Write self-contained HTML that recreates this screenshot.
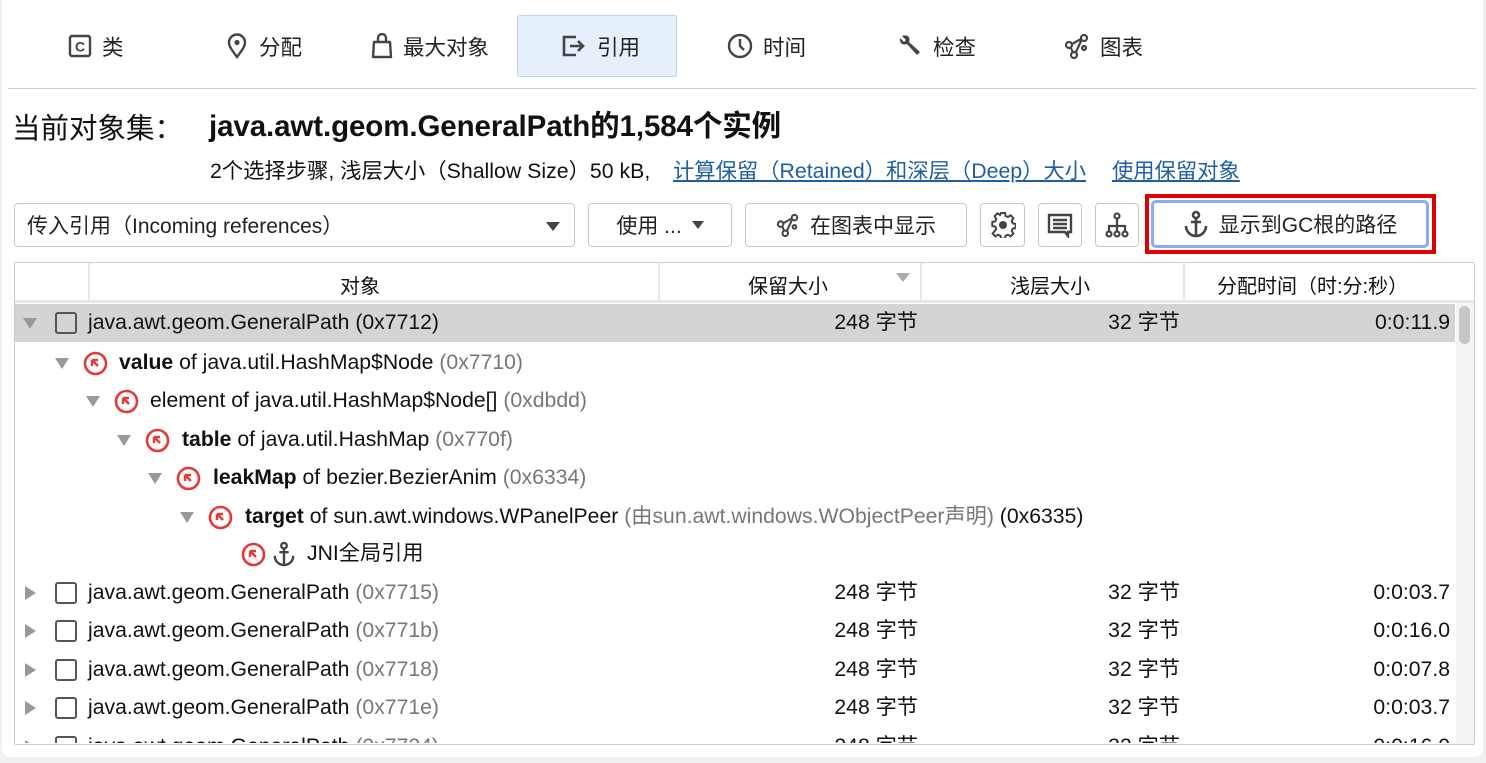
<!DOCTYPE html>
<html><head><meta charset="utf-8"><style>
*{box-sizing:border-box;margin:0;padding:0}
body{width:1486px;height:763px;background:#f0f0f0;font-family:"Liberation Sans","Noto Sans CJK SC",sans-serif;color:#111;position:relative;overflow:hidden}
.panel{position:absolute;left:2px;top:0;width:1481px;height:757px;background:#fff;border-radius:0 0 8px 8px}
.a{position:absolute;white-space:nowrap}
.tab{position:absolute;top:15px;height:62px;display:flex;align-items:center;font-size:21.5px;color:#222}
.tab svg{margin-right:10px}
.btn{position:absolute;top:203px;height:44px;border:1px solid #c8c8c8;border-radius:4px;background:#fff;display:flex;align-items:center;justify-content:center;font-size:21px;color:#222}
.gray{color:#777}
.row{position:absolute;left:15px;width:1440px;height:38px;font-size:21.2px;line-height:38px}
.row .a{top:0}
.tri{position:absolute;width:0;height:0}
.td{border-left:7px solid transparent;border-right:7px solid transparent;border-top:11px solid #999;top:14px}
.tr{border-top:7px solid transparent;border-bottom:7px solid transparent;border-left:11px solid #999;top:12px}
.cb{position:absolute;top:8px;width:22px;height:22px;border:2px solid #555;border-radius:3px}
.ri{position:absolute;top:7px}
.num{position:absolute;top:0;text-align:right}
</style></head><body>
<div class="panel"></div>
<div class="tab" style="left:68px"><svg width="24" height="24" viewBox="0 0 24 24"><rect x="2" y="2" width="20" height="20" rx="2" fill="none" stroke="#444" stroke-width="2.4"/><text x="12" y="17.5" font-size="14" text-anchor="middle" font-family="Liberation Sans" font-weight="bold" fill="#444">C</text></svg>类</div>
<div class="tab" style="left:225px"><svg width="24" height="26" viewBox="0 0 24 26"><path d="M12 24C6 16 4 13 4 9.5a8 8 0 0 1 16 0C20 13 18 16 12 24z" fill="none" stroke="#444" stroke-width="2.4"/><circle cx="12" cy="9.5" r="2.6" fill="#444"/></svg>分配</div>
<div class="tab" style="left:371px"><svg width="22" height="26" viewBox="0 0 22 26"><path d="M7 9V5a4 4 0 0 1 8 0v4" fill="none" stroke="#444" stroke-width="2.4"/><path d="M3 9h16l1 15H2z" fill="none" stroke="#444" stroke-width="2.4" stroke-linejoin="round"/></svg>最大对象</div>
<div style="position:absolute;left:517px;top:15px;width:160px;height:62px;background:#e6f0fc;border:1px solid #b9d3f3;border-radius:3px"></div>
<div class="tab" style="left:561px"><svg width="26" height="24" viewBox="0 0 26 24"><path d="M15 3H3v18h12" fill="none" stroke="#444" stroke-width="2.6"/><path d="M9 12h13M17 7l5 5-5 5" fill="none" stroke="#444" stroke-width="2.6"/></svg>引用</div>
<div class="tab" style="left:727px"><svg width="26" height="26" viewBox="0 0 26 26"><circle cx="13" cy="13" r="11" fill="none" stroke="#444" stroke-width="2.4"/><path d="M13 6v7l4 4" fill="none" stroke="#444" stroke-width="2.4"/></svg>时间</div>
<div class="tab" style="left:897px"><svg width="26" height="26" viewBox="0 0 26 26"><path d="M5 3l4 4-2 2-4-4C2 9 5 13 10 11l10 11 3-3-11-10c2-5-2-8-7-6z" fill="#444"/></svg>检查</div>
<div class="tab" style="left:1064px"><svg width="26" height="26" viewBox="0 0 26 26" fill="none" stroke="#444" stroke-width="2.2"><circle cx="20" cy="5" r="3"/><circle cx="5" cy="12" r="3"/><circle cx="10" cy="22" r="3"/><circle cx="20" cy="15" r="2"/><path d="M8 11l9-5M7 15l2 5M17.5 7l-6 13"/></svg>图表</div>
<div style="position:absolute;left:8px;top:88px;width:1468px;height:1px;background:#ccc"></div>
<div class="a" style="left:12px;top:107px;font-size:28.5px;font-family:'Noto Sans CJK SC',sans-serif;line-height:40px">当前对象集：</div>
<div class="a" style="left:209px;top:107px;font-size:29.5px;font-weight:bold;letter-spacing:-0.1px;line-height:40px">java.awt.geom.GeneralPath的1,584个实例</div>
<div class="a" style="left:210px;top:154px;font-size:21.3px">2个选择步骤, 浅层大小（Shallow Size）50 kB,</div>
<div class="a" style="left:673px;top:154px;font-size:21.3px;color:#1f5fa0;text-decoration:underline">计算保留（Retained）和深层（Deep）大小</div>
<div class="a" style="left:1112px;top:154px;font-size:21.3px;color:#1f5fa0;text-decoration:underline">使用保留对象</div>
<div class="btn" style="left:14px;width:561px;justify-content:flex-start;padding-left:12px">传入引用（Incoming references）<span class="tri" style="position:absolute;right:14px;top:18px;border-left:7px solid transparent;border-right:7px solid transparent;border-top:9px solid #444"></span></div>
<div class="btn" style="left:588px;width:144px">使用 ... <span style="display:inline-block;margin-left:10px;border-left:6px solid transparent;border-right:6px solid transparent;border-top:8px solid #444"></span></div>
<div class="btn" style="left:745px;width:222px"><svg width="24" height="24" viewBox="0 0 26 26" fill="none" stroke="#444" stroke-width="2.2" style="margin-right:10px"><circle cx="20" cy="5" r="3"/><circle cx="5" cy="12" r="3"/><circle cx="10" cy="22" r="3"/><circle cx="20" cy="15" r="2"/><path d="M8 11l9-5M7 15l2 5M17.5 7l-6 13"/></svg>在图表中显示</div>
<div class="btn" style="left:980px;width:45px"><svg width="26" height="26" viewBox="0 0 26 26"><path d="M11 2h4l.6 3 2.4 1 2.6-1.7 2.8 2.8L21.7 10l1 2.4 3 .6v4l-3 .6-1 2.4 1.7 2.6-2.8 2.8-2.6-1.7-2.4 1-.6 3h-4l-.6-3-2.4-1-2.6 1.7-2.8-2.8L6.3 18l-1-2.4-3-.6v-4l3-.6 1-2.4L4.6 5.1l2.8-2.8L10 4l.6-1z" transform="translate(0 -1)" fill="none" stroke="#444" stroke-width="2"/><circle cx="13" cy="13" r="4" fill="#444"/></svg></div>
<div class="btn" style="left:1038px;width:44px"><svg width="26" height="26" viewBox="0 0 26 26" fill="none" stroke="#444" stroke-width="2.4"><path d="M2 3h22v17h-3v4l-3-4H2z"/><path d="M6 8h14M6 12h14M6 16h14"/></svg></div>
<div class="btn" style="left:1095px;width:44px"><svg width="26" height="26" viewBox="0 0 26 26" fill="none" stroke="#444" stroke-width="2.2"><circle cx="13" cy="4" r="2.5"/><path d="M13 7v6M5 20v-6h16v6M13 13v7"/><circle cx="5" cy="22" r="2.5"/><circle cx="13" cy="22" r="2.5"/><circle cx="21" cy="22" r="2.5"/></svg></div>
<div style="position:absolute;left:1145px;top:194px;width:291px;height:60px;border:4px solid #e00000"></div>
<div class="btn" style="left:1151px;top:200px;width:278px;height:48px;border:3px solid #86adf0;border-radius:5px"><svg width="26" height="28" viewBox="0 0 26 28" fill="none" stroke="#444" stroke-width="2.6" style="margin-right:10px"><circle cx="13" cy="5" r="3"/><path d="M13 8v18M8 12h10M3 16c0 6 5 10 10 10s10-4 10-10"/></svg>显示到GC根的路径</div>
<div style="position:absolute;left:14px;top:262px;width:1461px;height:483px;border:1.5px solid #ccc;border-radius:2px;overflow:hidden;background:#fff">
 <div style="position:absolute;left:0;top:0;width:1461px;height:40px;border-bottom:3px solid #e8e8e8"></div>
 <div style="position:absolute;left:73px;top:0;width:2px;height:38px;background:#e8e8e8"></div>
 <div style="position:absolute;left:643px;top:0;width:2px;height:38px;background:#e8e8e8"></div>
 <div style="position:absolute;left:905px;top:0;width:2px;height:38px;background:#e8e8e8"></div>
 <div style="position:absolute;left:1168px;top:0;width:2px;height:38px;background:#e8e8e8"></div>
 <div class="a" style="left:325px;top:7px;font-size:20px">对象</div>
 <div class="a" style="left:733px;top:7px;font-size:20px">保留大小</div>
 <div style="position:absolute;left:881px;top:10px;border-left:7px solid transparent;border-right:7px solid transparent;border-top:9px solid #aaa"></div>
 <div class="a" style="left:995px;top:7px;font-size:20px">浅层大小</div>
 <div class="a" style="left:1202px;top:7px;font-size:20px">分配时间（时:分:秒）</div>
 <div style="position:absolute;left:1441px;top:40px;width:20px;height:443px;background:#f3f3f3"></div>
 <div style="position:absolute;left:1444px;top:43px;width:11px;height:38px;background:#c6c6c6;border-radius:6px"></div>
</div>
<div style="position:absolute;left:15px;top:304px;width:1440px;height:38px;background:#d4d4d4"></div>
<div class="row" style="top:304px"><span class="tri td" style="left:8px"></span><span class="cb" style="left:40px"></span><span class="a" style="left:73px">java.awt.geom.GeneralPath (0x7712)</span><span class="num" style="right:537px">248 字节</span><span class="num" style="right:275px">32 字节</span><span class="num" style="right:5px">0:0:11.9</span></div>
<div class="row" style="top:344px"><span class="tri td" style="left:40px"></span><svg class="ri" style="left:68px" width="25" height="25" viewBox="0 0 25 25"><circle cx="12.5" cy="12.5" r="10.5" fill="none" stroke="#e53935" stroke-width="2.6"/><path d="M9 9h6M9 9v6M9 9l6 6" stroke="#e53935" stroke-width="2.4" fill="none"/></svg><span class="a" style="left:104px"><b>value</b> of java.util.HashMap$Node <span class="gray">(0x7710)</span></span></div>
<div class="row" style="top:382px"><span class="tri td" style="left:71px"></span><svg class="ri" style="left:99px" width="25" height="25" viewBox="0 0 25 25"><circle cx="12.5" cy="12.5" r="10.5" fill="none" stroke="#e53935" stroke-width="2.6"/><path d="M9 9h6M9 9v6M9 9l6 6" stroke="#e53935" stroke-width="2.4" fill="none"/></svg><span class="a" style="left:135px">element of java.util.HashMap$Node[] <span class="gray">(0xdbdd)</span></span></div>
<div class="row" style="top:421px"><span class="tri td" style="left:102px"></span><svg class="ri" style="left:130px" width="25" height="25" viewBox="0 0 25 25"><circle cx="12.5" cy="12.5" r="10.5" fill="none" stroke="#e53935" stroke-width="2.6"/><path d="M9 9h6M9 9v6M9 9l6 6" stroke="#e53935" stroke-width="2.4" fill="none"/></svg><span class="a" style="left:167px"><b>table</b> of java.util.HashMap <span class="gray">(0x770f)</span></span></div>
<div class="row" style="top:459px"><span class="tri td" style="left:133px"></span><svg class="ri" style="left:161px" width="25" height="25" viewBox="0 0 25 25"><circle cx="12.5" cy="12.5" r="10.5" fill="none" stroke="#e53935" stroke-width="2.6"/><path d="M9 9h6M9 9v6M9 9l6 6" stroke="#e53935" stroke-width="2.4" fill="none"/></svg><span class="a" style="left:198px"><b>leakMap</b> of bezier.BezierAnim <span class="gray">(0x6334)</span></span></div>
<div class="row" style="top:498px"><span class="tri td" style="left:165px"></span><svg class="ri" style="left:193px" width="25" height="25" viewBox="0 0 25 25"><circle cx="12.5" cy="12.5" r="10.5" fill="none" stroke="#e53935" stroke-width="2.6"/><path d="M9 9h6M9 9v6M9 9l6 6" stroke="#e53935" stroke-width="2.4" fill="none"/></svg><span class="a" style="left:230px"><b>target</b> of sun.awt.windows.WPanelPeer <span class="gray">(由sun.awt.windows.WObjectPeer声明)</span> (0x6335)</span></div>
<div class="row" style="top:535px"><svg class="ri" style="left:226px" width="25" height="25" viewBox="0 0 25 25"><circle cx="12.5" cy="12.5" r="10.5" fill="none" stroke="#e53935" stroke-width="2.6"/><path d="M9 9h6M9 9v6M9 9l6 6" stroke="#e53935" stroke-width="2.4" fill="none"/></svg><svg class="ri" style="left:257px;top:5px" width="24" height="28" viewBox="0 0 26 28" fill="none" stroke="#444" stroke-width="2.6"><circle cx="13" cy="5" r="3"/><path d="M13 8v18M8 12h10M3 16c0 6 5 10 10 10s10-4 10-10"/></svg><span class="a" style="left:292px">JNI全局引用</span></div>
<div class="row" style="top:574px"><span class="tri tr" style="left:10px"></span><span class="cb" style="left:40px"></span><span class="a" style="left:73px">java.awt.geom.GeneralPath <span class="gray">(0x7715)</span></span><span class="num" style="right:537px">248 字节</span><span class="num" style="right:275px">32 字节</span><span class="num" style="right:5px">0:0:03.7</span></div>
<div class="row" style="top:612px"><span class="tri tr" style="left:10px"></span><span class="cb" style="left:40px"></span><span class="a" style="left:73px">java.awt.geom.GeneralPath <span class="gray">(0x771b)</span></span><span class="num" style="right:537px">248 字节</span><span class="num" style="right:275px">32 字节</span><span class="num" style="right:5px">0:0:16.0</span></div>
<div class="row" style="top:651px"><span class="tri tr" style="left:10px"></span><span class="cb" style="left:40px"></span><span class="a" style="left:73px">java.awt.geom.GeneralPath <span class="gray">(0x7718)</span></span><span class="num" style="right:537px">248 字节</span><span class="num" style="right:275px">32 字节</span><span class="num" style="right:5px">0:0:07.8</span></div>
<div class="row" style="top:689px"><span class="tri tr" style="left:10px"></span><span class="cb" style="left:40px"></span><span class="a" style="left:73px">java.awt.geom.GeneralPath <span class="gray">(0x771e)</span></span><span class="num" style="right:537px">248 字节</span><span class="num" style="right:275px">32 字节</span><span class="num" style="right:5px">0:0:03.7</span></div>
<div style="position:absolute;left:16px;top:728px;width:1439px;height:15px;overflow:hidden"><div class="row" style="left:-1px;top:0"><span class="tri tr" style="left:10px"></span><span class="cb" style="left:40px"></span><span class="a" style="left:73px">java.awt.geom.GeneralPath <span class="gray">(0x7724)</span></span><span class="num" style="right:537px">248 字节</span><span class="num" style="right:275px">32 字节</span><span class="num" style="right:5px">0:0:16.0</span></div></div>
</body></html>
